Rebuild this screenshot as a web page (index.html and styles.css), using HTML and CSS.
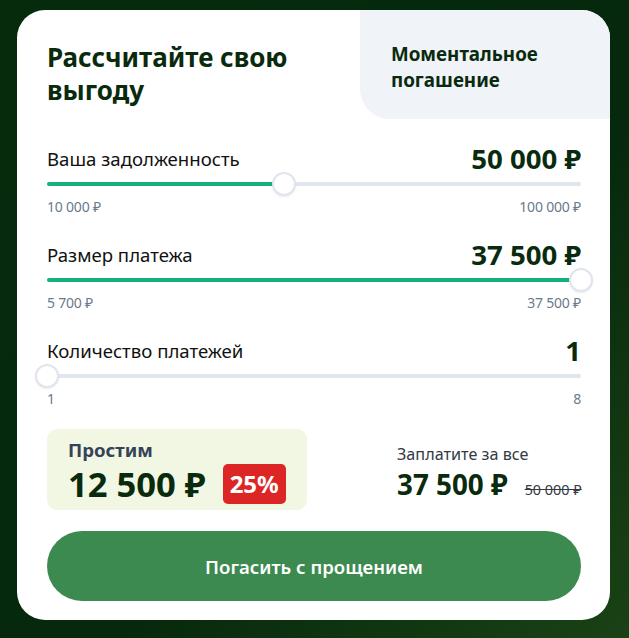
FILE: index.html
```html
<!DOCTYPE html>
<html lang="ru">
<head>
<meta charset="utf-8">
<title>Рассчитайте свою выгоду</title>
<link rel="stylesheet" href="styles.css">
</head>
<body>
<div class="page">
  <div class="card">
    <div class="header">
      <h1 class="title">Рассчитайте свою выгоду</h1>
      <div class="tab">Моментальное погашение</div>
    </div>
    <div class="sliders">
      <div class="slider">
        <div class="row"><span class="label">Ваша задолженность</span><span class="value">50 000 ₽</span></div>
        <div class="track"><div class="fill" style="width:44.4%"></div><div class="thumb" style="left:calc(44.4% - 12px)"></div></div>
        <div class="limits"><span>10 000 ₽</span><span>100 000 ₽</span></div>
      </div>
      <div class="slider">
        <div class="row"><span class="label">Размер платежа</span><span class="value">37 500 ₽</span></div>
        <div class="track"><div class="fill" style="width:100%"></div><div class="thumb" style="left:calc(100% - 12px)"></div></div>
        <div class="limits"><span>5 700 ₽</span><span>37 500 ₽</span></div>
      </div>
      <div class="slider">
        <div class="row"><span class="label">Количество платежей</span><span class="value">1</span></div>
        <div class="track"><div class="fill" style="width:0%"></div><div class="thumb" style="left:calc(0% - 12px)"></div></div>
        <div class="limits"><span>1</span><span>8</span></div>
      </div>
    </div>
    <div class="summary">
      <div class="forgive">
        <div class="forgive-title">Простим</div>
        <div class="forgive-row"><span class="forgive-sum">12 500 ₽</span><span class="badge">25%</span></div>
      </div>
      <div class="pay">
        <div class="pay-title">Заплатите за все</div>
        <div class="pay-row"><span class="pay-sum">37 500 ₽</span><span class="old">50 000 ₽</span></div>
      </div>
    </div>
    <button class="cta">Погасить с прощением</button>
  </div>
</div>
</body>
</html>
```

FILE: styles.css
```css
* { box-sizing: border-box; }
html, body { margin: 0; padding: 0; }
body {
  width: 629px;
  height: 638px;
  background: linear-gradient(135deg, #052a0c 0%, #06290d 60%, #1a4215 100%);
  font-family: "Noto Sans", "Open Sans", sans-serif;
  overflow: hidden;
}
.page {
  padding: 10px 19px 18px 17px;
}
.card {
  background: #fff;
  border-radius: 28px;
  overflow: hidden;
  height: 610px;
  display: flex;
  flex-direction: column;
}
.card > * { flex-shrink: 0; }
.header {
  display: flex;
  justify-content: space-between;
  height: 109px;
}
.title {
  margin: 0;
  padding: 31px 0 0 30px;
  font-size: 26px;
  line-height: 33px;
  font-weight: 700;
  color: #0a2a0e;
  width: 300px;
}
.tab {
  width: 250px;
  background: #f0f3f8;
  border-bottom-left-radius: 30px;
  padding: 31px 10px 0 31px;
  font-size: 18.8px;
  line-height: 26px;
  font-weight: 700;
  color: #0a2a0e;
}
.sliders {
  padding: 24px 29px 0 30px;
  display: flex;
  flex-direction: column;
  gap: 24px;
}
.row {
  display: flex;
  justify-content: space-between;
  align-items: center;
  height: 30px;
}
.label {
  font-size: 18.6px;
  color: #111;
}
.value {
  font-size: 27.6px;
  font-weight: 700;
  color: #0a2a0e;
}
.track {
  position: relative;
  height: 24px;
  margin-top: -1px;
}
.track::before {
  content: "";
  position: absolute;
  left: 0; right: 0; top: 10px;
  height: 4px;
  border-radius: 2px;
  background: #e2e7ef;
}
.fill {
  position: absolute;
  left: 0; top: 10px;
  height: 4px;
  border-radius: 2px;
  background: #14b07d;
}
.thumb {
  position: absolute;
  top: 0;
  width: 24px;
  height: 24px;
  border-radius: 50%;
  background: #fff;
  border: 2px solid #e0e5ee;
  box-shadow: 0 1px 2px rgba(0,0,0,0.08);
}
.limits {
  display: flex;
  justify-content: space-between;
  margin-top: 3px;
  font-size: 14px;
  line-height: 16px;
  color: #6b7a8c;
  letter-spacing: -0.2px;
}
.summary {
  display: flex;
  padding: 22px 29px 0 30px;
  gap: 90px;
}
.forgive {
  flex-shrink: 0;
  width: 260px;
  height: 81px;
  background: #f2f7e3;
  border-radius: 10px;
  padding: 8px 0 0 21px;
}
.forgive-title {
  font-size: 18.6px;
  font-weight: 700;
  line-height: 26px;
  color: #344357;
}
.forgive-row {
  display: flex;
  align-items: center;
  gap: 17px;
  margin-top: 1px;
  white-space: nowrap;
}
.forgive-sum {
  font-size: 34.6px;
  font-weight: 700;
  line-height: 40px;
  color: #0a2a0e;
}
.badge {
  background: #dc2626;
  color: #fff;
  font-size: 24px;
  font-weight: 700;
  line-height: 40px;
  padding: 0 7px;
  border-radius: 5px;
}
.pay {
  padding-top: 13px;
  white-space: nowrap;
}
.pay-title {
  font-size: 16.2px;
  line-height: 24px;
  color: #333a44;
}
.pay-row {
  display: flex;
  align-items: baseline;
  gap: 17px;
}
.pay-sum {
  font-size: 27.8px;
  font-weight: 700;
  line-height: 36px;
  color: #0a2a0e;
}
.old {
  font-size: 14.4px;
  color: #333a44;
  text-decoration: line-through;
}
.cta {
  margin: 21px 29px 0 30px;
  height: 70px;
  border: none;
  border-radius: 35px;
  background: #3d8a50;
  color: #fff;
  font-family: inherit;
  font-size: 18.6px;
  font-weight: 600;
}
```
